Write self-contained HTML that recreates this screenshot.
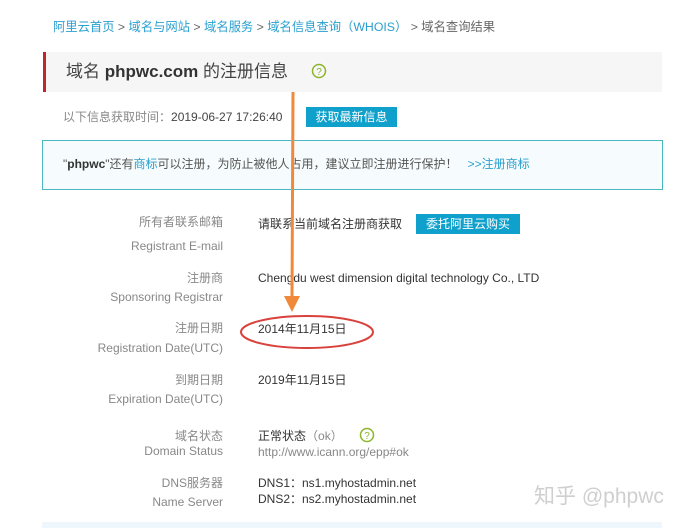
<!DOCTYPE html>
<html><head><meta charset="utf-8"><style>
body{margin:0;width:679px;height:528px;background:#fff;position:relative;overflow:hidden;font-family:"Liberation Sans","Noto Sans CJK SC",sans-serif;}
.a{position:absolute;white-space:nowrap;line-height:1;}
.l{position:absolute;right:456px;text-align:right;color:#888;font-size:12px;white-space:nowrap;line-height:1;}
.v{position:absolute;left:258px;color:#333;font-size:12px;white-space:nowrap;line-height:1;}
.blue{color:#2b9fcf}
</style></head><body>
<div class="a" style="left:53px;top:21px;font-size:12.3px;color:#666"><span class="blue">阿里云首页</span> &gt; <span class="blue">域名与网站</span> &gt; <span class="blue">域名服务</span> &gt; <span class="blue">域名信息查询（WHOIS）</span> &gt; 域名查询结果</div>
<div style="position:absolute;left:43px;top:52px;width:616px;height:40px;background:#f6f6f6;border-left:3px solid #c0262a;"></div>
<div class="a" style="left:66px;top:63px;font-size:17px;color:#444">域名 <b style="color:#333">phpwc.com</b> 的注册信息</div>
<svg style="position:absolute;left:311px;top:63px" width="16" height="16"><circle cx="8" cy="8" r="6.5" fill="none" stroke="#8db52c" stroke-width="1.5"/><text x="8" y="12" font-size="10" text-anchor="middle" fill="#8db52c" font-family="Liberation Sans">?</text></svg>
<div class="a" style="left:63px;top:111px;font-size:12px;color:#888">以下信息获取时间：<span style="color:#444">2019-06-27 17:26:40</span></div>
<div class="a" style="left:306px;top:107px;width:91px;height:20px;background:#0fa0cc;color:#fff;font-size:12px;line-height:20px;text-align:center">获取最新信息</div>
<div style="position:absolute;left:42px;top:140px;width:619px;height:48px;border:1px solid #4cb7c4;background:#f6fcfd"></div>
<div class="a" style="left:63px;top:158px;font-size:12px;color:#555">"<b style="color:#333">phpwc</b>"还有<span class="blue">商标</span>可以注册，为防止被他人占用，建议立即注册进行保护！ &nbsp; <span class="blue">&gt;&gt;注册商标</span></div>
<div class="l" style="top:216px">所有者联系邮箱</div><div class="l" style="top:240px">Registrant E-mail</div>
<div class="v" style="top:218px">请联系当前域名注册商获取</div>
<div class="a" style="left:416px;top:214px;width:104px;height:20px;background:#0fa0cc;color:#fff;font-size:12px;line-height:20px;text-align:center">委托阿里云购买</div>
<div class="l" style="top:272px">注册商</div><div class="l" style="top:291px">Sponsoring Registrar</div>
<div class="v" style="top:272px">Chengdu west dimension digital technology Co., LTD</div>
<div class="l" style="top:322px">注册日期</div><div class="l" style="top:342px">Registration Date(UTC)</div>
<div class="v" style="top:323px">2014年11月15日</div>
<div class="l" style="top:374px">到期日期</div><div class="l" style="top:393px">Expiration Date(UTC)</div>
<div class="v" style="top:374px">2019年11月15日</div>
<div class="l" style="top:430px">域名状态</div><div class="l" style="top:445px">Domain Status</div>
<div class="v" style="top:430px">正常状态<span style="color:#888">（ok）</span></div>
<svg style="position:absolute;left:359px;top:427px" width="16" height="16"><circle cx="8" cy="8" r="6.5" fill="none" stroke="#8db52c" stroke-width="1.5"/><text x="8" y="12" font-size="10" text-anchor="middle" fill="#8db52c" font-family="Liberation Sans">?</text></svg>
<div class="v" style="top:446px;color:#888">http://www.icann.org/epp#ok</div>
<div class="l" style="top:477px">DNS服务器</div><div class="l" style="top:496px">Name Server</div>
<div class="v" style="top:477px">DNS1：ns1.myhostadmin.net</div>
<div class="v" style="top:493px">DNS2：ns2.myhostadmin.net</div>
<div style="position:absolute;left:42px;top:522px;width:620px;height:6px;background:#eef7fb"></div>
<svg style="position:absolute;left:0;top:0" width="679" height="528">
<line x1="293" y1="92" x2="292" y2="298" stroke="#f08a3a" stroke-width="3"/>
<polygon points="284,296 300,296 292,312" fill="#f08a3a"/>
<ellipse cx="307" cy="332" rx="66" ry="16" fill="none" stroke="#d9413c" stroke-width="2"/>
</svg>
<div class="a" style="left:534px;top:486px;font-size:21px;color:#cfcfcf">知乎 @phpwc</div>
</body></html>
